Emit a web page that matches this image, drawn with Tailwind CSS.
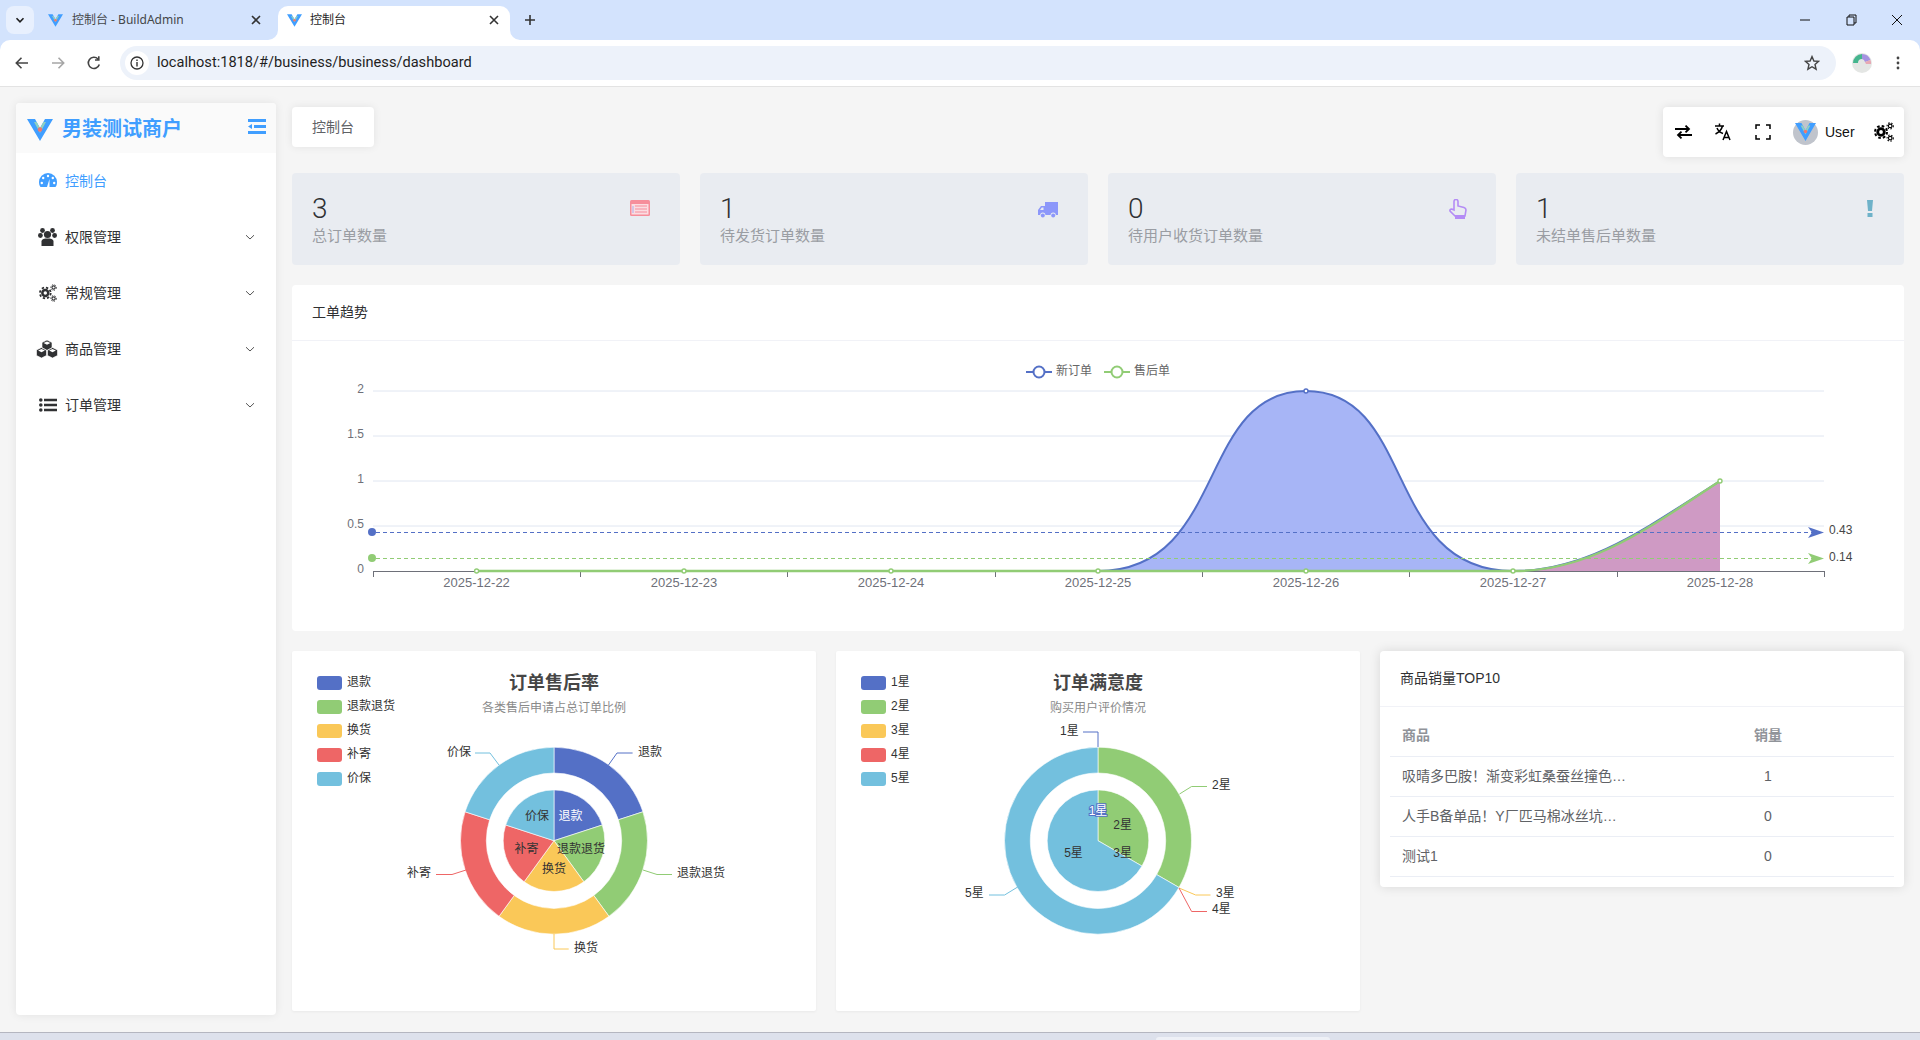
<!DOCTYPE html>
<html lang="zh">
<head>
<meta charset="utf-8">
<title>控制台</title>
<script src="https://cdn.jsdelivr.net/npm/@tailwindcss/browser@4"></script>
</head>
<body class="w-[1920px] h-[1040px] overflow-hidden bg-[#f5f5f5] flex flex-col font-['Liberation_Sans','Noto_Sans_CJK_SC',sans-serif] text-[#303133]">
<svg width="0" height="0" class="absolute">
  <symbol id="vlogo" viewBox="0 0 26 22"><polygon points="0,0 8,0 13,9 18,0 26,0 13,22" fill="#409eff"/><polygon points="7,3 9.5,3 13,9 16.5,3 19,3 13,14" fill="#8fd0c0"/><circle cx="13" cy="10.5" r="2.2" fill="#f0776c"/></symbol>
  <symbol id="cogs" viewBox="0 0 20 20"><circle cx="7" cy="10" r="3.3" fill="none" stroke="currentColor" stroke-width="2.8"/><circle cx="7" cy="10" r="6" fill="none" stroke="currentColor" stroke-width="2" stroke-dasharray="2.6 2.11"/><circle cx="16.2" cy="3.9" r="1.8" fill="none" stroke="currentColor" stroke-width="1.2"/><circle cx="16.2" cy="3.9" r="3.1" fill="none" stroke="currentColor" stroke-width="1.1" stroke-dasharray="1.5 1.55"/><circle cx="16.2" cy="16.1" r="1.8" fill="none" stroke="currentColor" stroke-width="1.2"/><circle cx="16.2" cy="16.1" r="3.1" fill="none" stroke="currentColor" stroke-width="1.1" stroke-dasharray="1.5 1.55"/></symbol>
  <symbol id="chev" viewBox="0 0 12 12"><path d="M2 4.2 L6 8 L10 4.2" fill="none" stroke="#555" stroke-width="1"/></symbol>
  <symbol id="x" viewBox="0 0 12 12"><path d="M2 2 L10 10 M10 2 L2 10" stroke="#333" stroke-width="1.6" fill="none"/></symbol>
</svg>

<!-- tab strip -->
<div class="relative h-10 shrink-0 bg-[#d3e3fd] flex items-start text-[12px] font-['Noto_Sans','Noto_Sans_CJK_SC',sans-serif]">
  <div class="mt-[6px] ml-[6px] w-7 h-7 rounded-lg bg-[#e8f0fe] flex items-center justify-center">
    <svg class="w-3 h-3" viewBox="0 0 12 12"><path d="M2.5 4.2 L6 7.8 L9.5 4.2" fill="none" stroke="#1f1f1f" stroke-width="1.6"/></svg>
  </div>
  <div class="mt-[6px] ml-[8px] w-[236px] h-7 flex items-center pl-[6px] text-[#44474a]">
    <svg class="w-[15px] h-[15px] shrink-0"><use href="#vlogo"/></svg>
    <span class="ml-[9px] w-[178px]">控制台 - BuildAdmin</span>
    <svg class="w-3 h-3"><use href="#x"/></svg>
  </div>
  <div class="relative mt-[6px] w-[232px] h-[34px] pb-[6px] bg-white rounded-t-[10px] flex items-center pl-[9px] text-[#1f1f1f]">
    <svg class="absolute left-[-10px] bottom-0 w-[10px] h-[10px]" viewBox="0 0 10 10"><path d="M0 10 A10 10 0 0 0 10 0 V10 Z" fill="#fff"/></svg>
    <svg class="absolute right-[-10px] bottom-0 w-[10px] h-[10px]" viewBox="0 0 10 10"><path d="M10 10 A10 10 0 0 1 0 0 V10 Z" fill="#fff"/></svg>
    <svg class="w-[15px] h-[15px] shrink-0"><use href="#vlogo"/></svg>
    <span class="ml-2 w-[178px]">控制台</span>
    <svg class="w-3 h-3"><use href="#x"/></svg>
  </div>
  <svg class="mt-[14px] ml-[14px] w-3 h-3" viewBox="0 0 12 12"><path d="M6 1 V11 M1 6 H11" stroke="#333" stroke-width="1.6"/></svg>
  <div class="ml-auto flex items-center h-10">
    <svg class="w-[46px] h-3" viewBox="0 0 46 12"><path d="M18 6 H28" stroke="#111" stroke-width="1"/></svg>
    <svg class="w-[46px] h-3" viewBox="0 0 46 12"><path d="M19 3 H26 V11 H19 Z M21 3 V1 H28 V9 H26" fill="none" stroke="#111" stroke-width="1"/></svg>
    <svg class="w-[46px] h-3" viewBox="0 0 46 12"><path d="M18 1 L28 11 M28 1 L18 11" stroke="#111" stroke-width="1"/></svg>
  </div>
</div>

<!-- toolbar -->
<div class="relative h-[47px] shrink-0 bg-[#d3e3fd]">
  <div class="h-full bg-white rounded-t-[10px] border-b border-[#e3e3e3] flex items-center">
    <svg class="ml-[14px] w-4 h-4" viewBox="0 0 16 16"><path d="M14 8 H2.5 M7.5 2.8 L2.3 8 L7.5 13.2" fill="none" stroke="#444" stroke-width="1.6"/></svg>
    <svg class="ml-[20px] w-4 h-4" viewBox="0 0 16 16"><path d="M2 8 H13.5 M8.5 2.8 L13.7 8 L8.5 13.2" fill="none" stroke="#a6a6a6" stroke-width="1.6"/></svg>
    <svg class="ml-[20px] w-4 h-4" viewBox="0 0 16 16"><path d="M13.3 9.5 A5.6 5.6 0 1 1 12 4 M12.8 1.2 V5 H9" fill="none" stroke="#444" stroke-width="1.6"/></svg>
    <div class="ml-[18px] w-[1716px] h-[34px] rounded-full bg-[#edf2fa] flex items-center pl-[5px]">
      <div class="w-6 h-6 rounded-full bg-white flex items-center justify-center">
        <svg class="w-[14px] h-[14px]" viewBox="0 0 14 14"><circle cx="7" cy="7" r="6" fill="none" stroke="#333" stroke-width="1.3"/><path d="M7 6 V10.4 M7 3.6 V5" stroke="#333" stroke-width="1.4"/></svg>
      </div>
      <span class="ml-[8px] text-[14.6px] text-[#1f1f1f] font-['Roboto',sans-serif]">localhost:1818/#/business/business/dashboard</span>
      <svg class="ml-auto mr-[16px] w-4 h-4" viewBox="0 0 16 16"><path d="M8 1.6 L9.9 6 L14.6 6.4 L11 9.5 L12.1 14.2 L8 11.7 L3.9 14.2 L5 9.5 L1.4 6.4 L6.1 6 Z" fill="none" stroke="#444" stroke-width="1.4"/></svg>
    </div>
    <svg class="ml-[16px] w-5 h-5" viewBox="0 0 20 20"><circle cx="10" cy="10" r="10" fill="#e4e6e4"/><path d="M1 10 A9 9 0 0 1 10 1 V6 A4 4 0 0 0 6 10 Z" fill="#45b58e"/><path d="M10 1 A9 9 0 0 1 18.5 7 L13 9 A4 4 0 0 0 10 6 Z" fill="#a592e0"/><path d="M18.5 7 A9 9 0 0 1 19 11 L14 11 L13 9 Z" fill="#e7a9b4"/></svg>
    <svg class="ml-[18px] w-4 h-4" viewBox="0 0 16 16"><circle cx="8" cy="3" r="1.4" fill="#444"/><circle cx="8" cy="8" r="1.4" fill="#444"/><circle cx="8" cy="13" r="1.4" fill="#444"/></svg>
  </div>
</div>

<!-- page -->
<div class="flex-1 min-h-0 flex items-start">
  <aside class="ml-4 mt-4 w-[260px] h-[912px] bg-white rounded-[4px] shadow-[0_0_10px_rgba(0,0,0,0.08)] overflow-hidden shrink-0">
    <div class="h-[50px] bg-[#fafafa] flex items-center pl-[11px] pr-[10px]">
      <svg class="mt-1 w-[26px] h-[22px]"><use href="#vlogo"/></svg>
      <span class="ml-[9px] pt-[2px] text-[20px] font-bold text-[#409eff]">男装测试商户</span>
      <svg class="ml-auto mb-[3px] w-[18px] h-[15px]" viewBox="0 0 18 15"><path d="M0 0 H18 V3 H0 Z M6 6 H18 V9 H6 Z M0 12 H18 V15 H0 Z M4 5 V10 L0 7.5 Z" fill="#409eff"/></svg>
    </div>
    <nav class="text-[14px]">
      <div class="h-14 flex items-center pl-[23px] text-[#409eff]">
        <svg class="w-[18px] h-4" viewBox="0 0 18 16"><path d="M9 0 A9 9 0 0 1 18 9 C18 11 17.5 13 16.5 14 H1.5 C.5 13 0 11 0 9 A9 9 0 0 1 9 0 Z" fill="#409eff"/><circle cx="9" cy="3" r="1.2" fill="#fff"/><circle cx="4.2" cy="5" r="1.2" fill="#fff"/><circle cx="13.8" cy="5" r="1.2" fill="#fff"/><circle cx="2.8" cy="10" r="1.2" fill="#fff"/><circle cx="15.2" cy="10" r="1.2" fill="#fff"/><path d="M8 14 L10.5 6 L10.5 14 Z" fill="#fff"/></svg>
        <span class="ml-2">控制台</span>
      </div>
      <div class="h-14 flex items-center pl-[22px] pr-5">
        <svg class="w-[19px] h-[18px]" viewBox="0 0 19 18" fill="#303133"><circle cx="9.5" cy="6.5" r="3.6"/><circle cx="4.5" cy="2.5" r="2.4"/><circle cx="14.5" cy="2.5" r="2.4"/><circle cx="2.4" cy="7.5" r="2.4"/><circle cx="16.6" cy="7.5" r="2.4"/><path d="M3.5 18 V13.5 C3.5 11 6.5 10.5 9.5 10.5 C12.5 10.5 15.5 11 15.5 13.5 V18 Z"/></svg>
        <span class="ml-2">权限管理</span>
        <svg class="ml-auto w-3 h-3"><use href="#chev"/></svg>
      </div>
      <div class="h-14 flex items-center pl-[23px] pr-5">
        <svg class="w-[18px] h-[18px] text-[#303133]"><use href="#cogs"/></svg>
        <span class="ml-2">常规管理</span>
        <svg class="ml-auto w-3 h-3"><use href="#chev"/></svg>
      </div>
      <div class="h-14 flex items-center pl-[20px] pr-5">
        <svg class="w-[22px] h-[18px] mr-[-1px]" viewBox="0 0 22 18"><path d="M11 0 L16 2.5 V8 L11 10.5 L6 8 V2.5 Z M5.5 7.5 L10.5 10 V15.5 L5.5 18 L.5 15.5 V10 Z M16.5 7.5 L21.5 10 V15.5 L16.5 18 L11.5 15.5 V10 Z" fill="#303133" stroke="#fff" stroke-width=".6"/><path d="M11 1.4 L14.4 3 L11 4.7 L7.6 3 Z M5.5 8.9 L8.9 10.5 L5.5 12.2 L2.1 10.5 Z M16.5 8.9 L19.9 10.5 L16.5 12.2 L13.1 10.5 Z" fill="#fff"/></svg>
        <span class="ml-2">商品管理</span>
        <svg class="ml-auto w-3 h-3"><use href="#chev"/></svg>
      </div>
      <div class="h-14 flex items-center pl-[23px] pr-5">
        <svg class="w-[18px] h-[14px]" viewBox="0 0 18 14" fill="#303133"><circle cx="1.8" cy="2" r="1.8"/><circle cx="1.8" cy="7" r="1.8"/><circle cx="1.8" cy="12" r="1.8"/><path d="M5 .7 H18 V3.3 H5 Z M5 5.7 H18 V8.3 H5 Z M5 10.7 H18 V13.3 H5 Z"/></svg>
        <span class="ml-2">订单管理</span>
        <svg class="ml-auto w-3 h-3"><use href="#chev"/></svg>
      </div>
    </nav>
  </aside>

  <main class="ml-4 w-[1612px] shrink-0">
    <div class="h-[86px] pt-5 flex items-start justify-between">
      <div class="w-[82px] h-10 bg-white rounded-[4px] shadow-[0_0_8px_rgba(0,0,0,0.08)] flex items-center justify-center text-[14px] text-[#606266]">控制台</div>
      <div class="w-[241px] h-[50px] bg-white rounded-[4px] shadow-[0_0_10px_rgba(0,0,0,0.1)] flex items-center text-black">
        <div class="w-10 flex justify-center"><svg class="w-[17px] h-[14px]" viewBox="0 0 17 14"><path d="M0 4 H14 M10.5 .6 L14 4 L10.5 7.4 M17 10 H3 M6.5 6.6 L3 10 L6.5 13.4" fill="none" stroke="#000" stroke-width="1.8"/></svg></div>
        <div class="w-10 flex justify-center"><svg class="w-4 h-[18px]" viewBox="0 0 16 18"><path d="M0 3 H9 M4.5 .5 V3 M7.5 3 C6.5 7 3.5 9.5 .5 11 M2 5 C3 7.5 5 9.5 8 10.5 M8 17 L11.5 8.5 L15 17 M9.2 14.5 H13.8" fill="none" stroke="#000" stroke-width="1.5"/></svg></div>
        <div class="w-10 flex justify-center"><svg class="w-4 h-4" viewBox="0 0 16 16"><path d="M1 5 V1 H5 M11 1 H15 V5 M15 11 V15 H11 M5 15 H1 V11" fill="none" stroke="#000" stroke-width="1.5"/></svg></div>
        <div class="ml-[10px] w-[25px] h-[25px] rounded-full bg-[#c0c4cc] flex items-center justify-center shrink-0"><svg class="w-[21px] h-[18px]"><use href="#vlogo"/></svg></div>
        <span class="ml-[7px] text-[14px] text-[#111]">User</span>
        <svg class="ml-auto mr-[10px] w-5 h-5 text-black"><use href="#cogs"/></svg>
      </div>
    </div>

    <div class="grid grid-cols-4 gap-5 h-[92px]">
      <div class="bg-[#e9ecf1] rounded-[4px] flex justify-between pl-5 pr-[30px] pt-[21px]">
        <div><div class="text-[28px] leading-[30px] font-light font-['Roboto',sans-serif]">3</div><div class="mt-[2px] text-[15px] leading-5 text-[#9a9da3]">总订单数量</div></div>
        <svg class="mt-[6px] w-5 h-4" viewBox="0 0 20 16"><rect width="20" height="16" rx="1.5" fill="#f68e9b"/><rect x="1.5" y="4" width="17" height="10.5" fill="#fbdde2"/><path d="M5 6 H17 M5 9 H17 M5 12 H17" stroke="#f68e9b" stroke-width="1.2"/><path d="M3 6 V13" stroke="#b9b6ea" stroke-width="1.2"/></svg>
      </div>
      <div class="bg-[#e9ecf1] rounded-[4px] flex justify-between pl-5 pr-[30px] pt-[21px]">
        <div><div class="text-[28px] leading-[30px] font-light font-['Roboto',sans-serif]">1</div><div class="mt-[2px] text-[15px] leading-5 text-[#9a9da3]">待发货订单数量</div></div>
        <svg class="mt-2 w-5 h-4" viewBox="0 0 20 16"><path d="M7 0 H20 V13 H17.8 A2.6 2.6 0 0 0 12.6 13 H7.4 A2.6 2.6 0 0 0 2.2 13 H0 V8 L3 4 H7 Z" fill="#8c97fa"/><path d="M2 8 L3.8 5.4 H5.5 V8 Z" fill="#e9ecf1"/><circle cx="4.8" cy="13.5" r="2" fill="#8c97fa"/><circle cx="15.2" cy="13.5" r="2" fill="#8c97fa"/></svg>
      </div>
      <div class="bg-[#e9ecf1] rounded-[4px] flex justify-between pl-5 pr-[29px] pt-[21px]">
        <div><div class="text-[28px] leading-[30px] font-light font-['Roboto',sans-serif]">0</div><div class="mt-[2px] text-[15px] leading-5 text-[#9a9da3]">待用户收货订单数量</div></div>
        <svg class="mt-[5px] w-[18px] h-5" viewBox="0 0 18 20"><path d="M5 11 V2.5 A2 2 0 0 1 9 2.5 V7 L15 8.5 C16.5 9 17 10 17 11 L16 17 H6 L1 12 C.5 10.5 2.5 9.5 4 10.5 Z" fill="none" stroke="#b48cf5" stroke-width="1.6"/><rect x="6" y="16" width="10" height="4" fill="#b48cf5"/></svg>
      </div>
      <div class="bg-[#e9ecf1] rounded-[4px] flex justify-between pl-5 pr-[31px] pt-[21px]">
        <div><div class="text-[28px] leading-[30px] font-light font-['Roboto',sans-serif]">1</div><div class="mt-[2px] text-[15px] leading-5 text-[#9a9da3]">未结单售后单数量</div></div>
        <svg class="mt-[6px] w-[6px] h-[17px]" viewBox="0 0 6 17"><path d="M0 0 H6 L5 11 H1 Z M.5 13 H5.5 V17 H.5 Z" fill="#6eb2c9"/></svg>
      </div>
    </div>

    <section class="mt-5 h-[346px] bg-white rounded-[4px]">
      <div class="h-14 border-b border-[#f1f2f7] flex items-center pl-5 text-[14px]">工单趋势</div>
      <svg class="block" width="1612" height="290" viewBox="292 341 1612 290" font-size="12" fill="#6e7079">
        <path d="M373 391 H1824 M373 436 H1824 M373 481 H1824 M373 526 H1824" stroke="#e0e6f1" stroke-width="1"/>
        <g text-anchor="end" dominant-baseline="middle">
          <text x="364" y="390">2</text><text x="364" y="435">1.5</text><text x="364" y="480">1</text><text x="364" y="525">0.5</text><text x="364" y="570">0</text>
        </g>
        <g text-anchor="middle" dominant-baseline="middle" font-size="13">
          <text x="476.6" y="584">2025-12-22</text><text x="684" y="584">2025-12-23</text><text x="891" y="584">2025-12-24</text><text x="1098" y="584">2025-12-25</text><text x="1306" y="584">2025-12-26</text><text x="1513" y="584">2025-12-27</text><text x="1720" y="584">2025-12-28</text>
        </g>
        <!-- areas -->
        <path d="M1098 571 C1228 571 1196 391 1306 391 C1416 391 1383 571 1513 571 Z" fill="#a7b5f6"/>
        <path d="M1513 571 C1590 571 1650 525 1720 481 V571 Z" fill="#cf9ac4"/>
        <!-- axis -->
        <path d="M373 571.5 H1824 M373.5 571 V577 M580.5 571 V577 M787.5 571 V577 M995.5 571 V577 M1202.5 571 V577 M1409.5 571 V577 M1617.5 571 V577 M1824.5 571 V577" stroke="#6e7079" stroke-width="1" fill="none"/>
        <!-- lines -->
        <path d="M476.6 571 H1098 C1228 571 1196 391 1306 391 C1416 391 1383 571 1513 571 C1590 571 1650 525 1720 481" fill="none" stroke="#5470c6" stroke-width="2"/>
        <path d="M476.6 571 H1513 C1590 572 1650 527 1720 481" fill="none" stroke="#91cc75" stroke-width="2.4"/>
        <!-- mark lines -->
        <path d="M376 532.5 H1812" stroke="#5470c6" stroke-width="1" stroke-dasharray="4 3"/>
        <path d="M376 558.5 H1812" stroke="#91cc75" stroke-width="1" stroke-dasharray="4 3"/>
        <circle cx="372" cy="532" r="4" fill="#5470c6"/><circle cx="372" cy="558" r="4" fill="#91cc75"/>
        <path d="M1808 527 L1824 532.5 L1808 538 L1812 532.5 Z" fill="#5470c6"/>
        <path d="M1808 553 L1824 558.5 L1808 564 L1812 558.5 Z" fill="#91cc75"/>
        <text x="1829" y="531" dominant-baseline="middle" fill="#464646">0.43</text>
        <text x="1829" y="558" dominant-baseline="middle" fill="#464646">0.14</text>
        <!-- markers -->
        <g fill="#fff" stroke="#91cc75" stroke-width="1.4">
          <circle cx="476.6" cy="571" r="2"/><circle cx="684" cy="571" r="2"/><circle cx="891" cy="571" r="2"/><circle cx="1098" cy="571" r="2"/><circle cx="1306" cy="571" r="2"/><circle cx="1513" cy="571" r="2"/><circle cx="1720" cy="481" r="2"/>
        </g>
        <circle cx="1306" cy="391" r="2" fill="#fff" stroke="#5470c6" stroke-width="1.4"/>
        <!-- legend -->
        <path d="M1026 372 H1052" stroke="#5470c6" stroke-width="2"/><circle cx="1039" cy="372" r="5.5" fill="#fff" stroke="#5470c6" stroke-width="2"/>
        <text x="1056" y="372" dominant-baseline="middle" fill="#666">新订单</text>
        <path d="M1104 372 H1130" stroke="#91cc75" stroke-width="2"/><circle cx="1117" cy="372" r="5.5" fill="#fff" stroke="#91cc75" stroke-width="2"/>
        <text x="1134" y="372" dominant-baseline="middle" fill="#666">售后单</text>
      </svg>
    </section>

    <div class="mt-5 flex items-start gap-5">
      <section class="w-[524px] h-[360px] bg-white rounded-[2px] shadow-[0_1px_3px_rgba(0,0,0,0.05)] shrink-0">
        <svg class="block" width="524" height="360" viewBox="292 651 524 360" font-size="12" fill="#333">
          <g>
            <rect x="317" y="676" width="25" height="14" rx="3" fill="#5470c6"/><rect x="317" y="700" width="25" height="14" rx="3" fill="#91cc75"/><rect x="317" y="724" width="25" height="14" rx="3" fill="#fac858"/><rect x="317" y="748" width="25" height="14" rx="3" fill="#ee6666"/><rect x="317" y="772" width="25" height="14" rx="3" fill="#73c0de"/>
            <g dominant-baseline="middle"><text x="347" y="683">退款</text><text x="347" y="707">退款退货</text><text x="347" y="731">换货</text><text x="347" y="755">补寄</text><text x="347" y="779">价保</text></g>
          </g>
          <text x="554" y="684.5" text-anchor="middle" dominant-baseline="middle" font-size="18" font-weight="700" fill="#464646">订单售后率</text>
          <text x="554" y="709" text-anchor="middle" dominant-baseline="middle" fill="#8a8a8a">各类售后申请占总订单比例</text>
          <g transform="translate(554 840.7)" stroke="#fff" stroke-width=".6">
            <path d="M0 -93.5 A93.5 93.5 0 0 1 88.93 -28.89 L64.39 -20.92 A67.7 67.7 0 0 0 0 -67.7 Z" fill="#5470c6"/>
            <path d="M88.93 -28.89 A93.5 93.5 0 0 1 54.96 75.64 L39.79 54.77 A67.7 67.7 0 0 0 64.39 -20.92 Z" fill="#91cc75"/>
            <path d="M54.96 75.64 A93.5 93.5 0 0 1 -54.96 75.64 L-39.79 54.77 A67.7 67.7 0 0 0 39.79 54.77 Z" fill="#fac858"/>
            <path d="M-54.96 75.64 A93.5 93.5 0 0 1 -88.93 -28.89 L-64.39 -20.92 A67.7 67.7 0 0 0 -39.79 54.77 Z" fill="#ee6666"/>
            <path d="M-88.93 -28.89 A93.5 93.5 0 0 1 0 -93.5 L0 -67.7 A67.7 67.7 0 0 0 -64.39 -20.92 Z" fill="#73c0de"/>
            <path d="M0 0 L0 -50.8 A50.8 50.8 0 0 1 48.31 -15.7 Z" fill="#5470c6"/>
            <path d="M0 0 L48.31 -15.7 A50.8 50.8 0 0 1 29.86 41.1 Z" fill="#91cc75"/>
            <path d="M0 0 L29.86 41.1 A50.8 50.8 0 0 1 -29.86 41.1 Z" fill="#fac858"/>
            <path d="M0 0 L-29.86 41.1 A50.8 50.8 0 0 1 -48.31 -15.7 Z" fill="#ee6666"/>
            <path d="M0 0 L-48.31 -15.7 A50.8 50.8 0 0 1 0 -50.8 Z" fill="#73c0de"/>
          </g>
          <g fill="none" stroke-width="1">
            <path d="M608.5 765 L617 753 H632.6" stroke="#5470c6"/>
            <path d="M643 870 L657 874.5 H672" stroke="#91cc75"/>
            <path d="M554 934 V949 H568.7" stroke="#fac858"/>
            <path d="M466 870 L452 874.5 H436" stroke="#ee6666"/>
            <path d="M499 765 L490 753 H475" stroke="#73c0de"/>
          </g>
          <g dominant-baseline="middle">
            <text x="638" y="753">退款</text><text x="677" y="874">退款退货</text><text x="574" y="949">换货</text><text x="407" y="874">补寄</text><text x="447" y="753">价保</text>
          </g>
          <g text-anchor="middle" dominant-baseline="middle">
            <text x="570.6" y="817" fill="#fff">退款</text><text x="581" y="849.7">退款退货</text><text x="554" y="870">换货</text><text x="526.6" y="850">补寄</text><text x="537" y="817">价保</text>
          </g>
        </svg>
      </section>

      <section class="w-[524px] h-[360px] bg-white rounded-[2px] shadow-[0_1px_3px_rgba(0,0,0,0.05)] shrink-0">
        <svg class="block" width="524" height="360" viewBox="836 651 524 360" font-size="12" fill="#333">
          <g>
            <rect x="861" y="676" width="25" height="14" rx="3" fill="#5470c6"/><rect x="861" y="700" width="25" height="14" rx="3" fill="#91cc75"/><rect x="861" y="724" width="25" height="14" rx="3" fill="#fac858"/><rect x="861" y="748" width="25" height="14" rx="3" fill="#ee6666"/><rect x="861" y="772" width="25" height="14" rx="3" fill="#73c0de"/>
            <g dominant-baseline="middle"><text x="891" y="683">1星</text><text x="891" y="707">2星</text><text x="891" y="731">3星</text><text x="891" y="755">4星</text><text x="891" y="779">5星</text></g>
          </g>
          <text x="1098" y="684.5" text-anchor="middle" dominant-baseline="middle" font-size="18" font-weight="700" fill="#464646">订单满意度</text>
          <text x="1098" y="709" text-anchor="middle" dominant-baseline="middle" fill="#8a8a8a">购买用户评价情况</text>
          <g transform="translate(1098 840.7)" stroke="#fff" stroke-width=".6">
            <path d="M0 -93.5 A93.5 93.5 0 0 1 80.97 46.75 L58.63 33.85 A67.7 67.7 0 0 0 0 -67.7 Z" fill="#91cc75"/>
            <path d="M80.97 46.75 A93.5 93.5 0 1 1 0 -93.5 L0 -67.7 A67.7 67.7 0 1 0 58.63 33.85 Z" fill="#73c0de"/>
            <path d="M0 0 L0 -50.8 A50.8 50.8 0 0 1 43.99 25.4 Z" fill="#91cc75"/>
            <path d="M0 0 L43.99 25.4 A50.8 50.8 0 1 1 0 -50.8 Z" fill="#73c0de"/>
          </g>
          <g fill="none" stroke-width="1">
            <path d="M1098 747 V732 H1083" stroke="#5470c6"/>
            <path d="M1179.5 794 L1191.6 786.5 H1207" stroke="#91cc75"/>
            <path d="M1179 888 L1195.7 895 H1210.5" stroke="#fac858"/>
            <path d="M1179 888 L1191.6 911.5 H1207" stroke="#ee6666"/>
            <path d="M1017.7 887 L1004.6 895 H989" stroke="#73c0de"/>
          </g>
          <g dominant-baseline="middle">
            <text x="1060" y="731.5">1星</text><text x="1212" y="785.5">2星</text><text x="1216" y="893.5">3星</text><text x="1212" y="909.5">4星</text><text x="965" y="893.5">5星</text>
          </g>
          <g text-anchor="middle" dominant-baseline="middle">
            <text x="1098" y="812" fill="#fff" stroke="#5470c6" stroke-width="2" paint-order="stroke">1星</text><text x="1122.7" y="826">2星</text><text x="1122.7" y="854">3星</text><text x="1073.5" y="854">5星</text>
          </g>
        </svg>
      </section>

      <section class="w-[524px] h-[236px] bg-white rounded-[4px] shadow-[0_0_12px_rgba(0,0,0,0.12)] shrink-0">
        <div class="h-14 border-b border-[#f1f2f7] flex items-center pl-5 text-[14px]">商品销量TOP10</div>
        <div class="px-[10px] pt-[9px] pb-[11px] text-[14px] text-[#606266]">
          <table class="w-full table-fixed border-collapse">
            <thead>
              <tr class="h-10 border-b border-[#ebeef5] text-[#909399]">
                <th class="pl-3 text-left font-bold">商品</th><th class="text-center font-bold">销量</th>
              </tr>
            </thead>
            <tbody>
              <tr class="h-10 border-b border-[#ebeef5]"><td class="pl-3">吸晴多巴胺！渐变彩虹桑蚕丝撞色…</td><td class="text-center">1</td></tr>
              <tr class="h-10 border-b border-[#ebeef5]"><td class="pl-3">人手B备单品！Y厂匹马棉冰丝坑…</td><td class="text-center">0</td></tr>
              <tr class="h-10 border-b border-[#ebeef5]"><td class="pl-3">测试1</td><td class="text-center">0</td></tr>
            </tbody>
          </table>
        </div>
      </section>
    </div>
  </main>
</div>

<!-- desktop edge -->
<div class="relative h-2 shrink-0 bg-[#dde1ec] border-t border-[#b4b6c0]">
  <div class="absolute left-[1156px] top-[4px] w-[174px] h-[3px] bg-[#eef0f6] rounded-t-[3px]"></div>
</div>
</body>
</html>
